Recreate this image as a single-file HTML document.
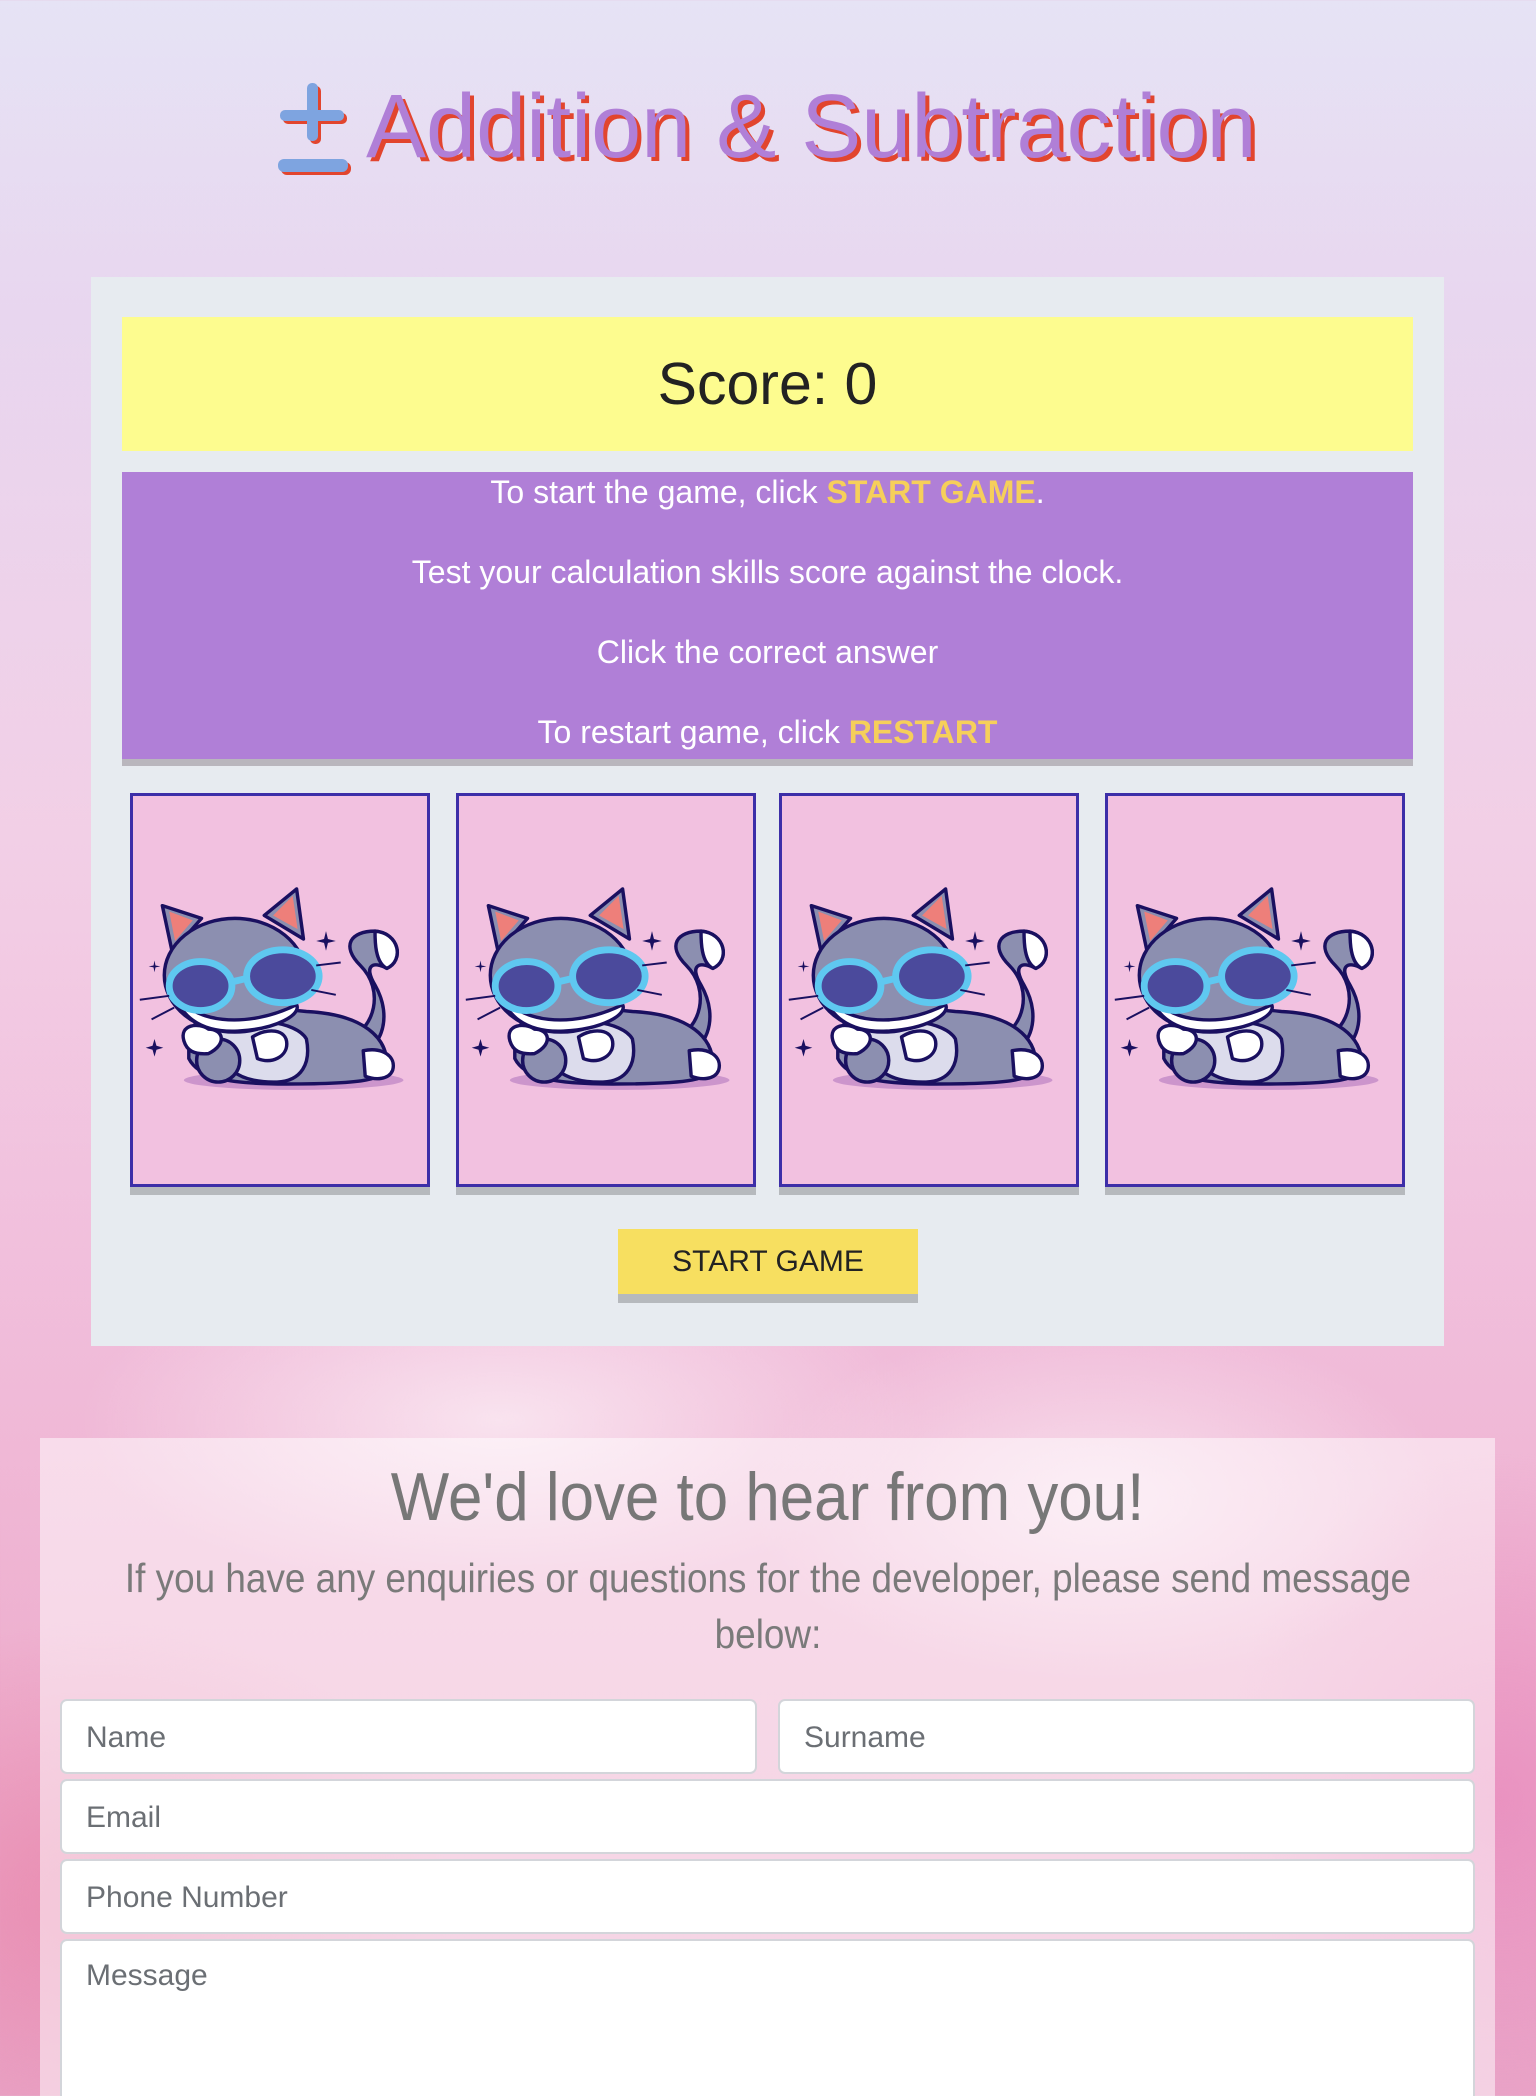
<!DOCTYPE html>
<html><head><meta charset="utf-8"><style>
*{box-sizing:border-box;margin:0;padding:0}
html,body{width:1536px;height:2096px;overflow:hidden}
body{font-family:"Liberation Sans",Arial,sans-serif;position:relative;
background:
radial-gradient(ellipse 500px 260px at 1100px 1500px,rgba(255,255,255,.55),rgba(255,255,255,0) 70%),
radial-gradient(ellipse 600px 250px at 500px 1420px,rgba(255,255,255,.6),rgba(255,255,255,0) 70%),
radial-gradient(ellipse 500px 400px at 100px 1900px,rgba(230,110,150,.5),rgba(230,110,150,0) 70%),
radial-gradient(ellipse 400px 500px at 1500px 1800px,rgba(230,120,180,.5),rgba(230,120,180,0) 70%),
linear-gradient(180deg,#e6e3f5 0%,#e8d6ef 15%,#f2cfe6 40%,#f1bfdc 60%,#eeb0cf 80%,#e9a6c8 100%);}
h1{position:absolute;left:366px;top:76px;font-size:90px;font-weight:normal;color:#b07fd7;text-shadow:4px 4px 0 #e2452e;white-space:nowrap;letter-spacing:0}
.panel{position:absolute;left:91px;top:277px;width:1353px;height:1069px;background:#e7ebf0}
.score{position:absolute;left:31px;top:40px;width:1291px;height:134px;background:#fdfc8f;font-size:59px;color:#222;text-align:center;line-height:134px}
.info{position:absolute;left:31px;top:195px;width:1291px;height:294px;background:#b07fd7;border-bottom:7px solid #b9b6bd;color:#fff;font-size:32px;text-align:center}
.info p{position:absolute;left:0;right:0}
.info b{color:#f6cf5a}
.card{position:absolute;top:516px;width:300px;height:402px;border-bottom:8px solid #b6b9bd}
.card div{width:300px;height:394px;background:#f2c1e0;border:3px solid #3d2ea8}
.btn{position:absolute;left:527px;top:952px;width:300px;height:74px;background:#f7df60;border-bottom:9px solid #b6b9bd;font-size:30px;text-align:center;line-height:66px;color:#222}
.contact{position:absolute;left:40px;top:1438px;width:1455px;height:700px;background:rgba(255,255,255,.5)}
.contact h2{position:absolute;left:0;right:0;top:20px;text-align:center;font-weight:normal;font-size:68px;color:#777;transform:scaleX(.91)}
.contact .sub{position:absolute;left:-22px;width:1500px;top:112px;text-align:center;font-size:41px;line-height:56px;color:#7a7a7a;transform:scaleX(.9)}
.in{position:absolute;background:#fff;border:2px solid #d3d5da;border-radius:7px;font-size:30px;color:#6b6f74;padding-left:24px;line-height:73px}
</style></head><body>
<svg style="position:absolute;left:278px;top:80px" width="76" height="100" viewBox="0 0 76 100">
<g fill="#e2452e"><rect x="32" y="6" width="11" height="58" rx="5"/><rect x="5" y="33" width="64" height="11" rx="5"/><rect x="3" y="82" width="70" height="13" rx="6"/></g>
<g fill="#7ea4e0"><rect x="29" y="3" width="11" height="58" rx="5"/><rect x="2" y="30" width="64" height="11" rx="5"/><rect x="0" y="79" width="70" height="13" rx="6"/></g>
</svg>
<h1>Addition &amp; Subtraction</h1>
<svg width="0" height="0" style="position:absolute"><defs>
<symbol id="cat" viewBox="0 0 300 394">
<ellipse cx="167" cy="292" rx="112" ry="10" fill="#cc95cc"/>
<g stroke="#1a1060" stroke-width="3.5" stroke-linejoin="round">
<path d="M222 250 C250 240 260 200 235 175 C215 155 225 140 250 140 C275 142 280 170 262 178 C248 170 238 175 250 195 C270 230 255 265 225 270Z" fill="#8c8fb0"/>
<path d="M250 140 C275 142 280 170 262 178 C250 172 250 150 250 140Z" fill="#fff"/>
<path d="M60 250 C60 220 120 215 180 222 C240 225 262 250 262 275 C262 292 240 296 160 296 C100 296 70 290 60 270Z" fill="#8c8fb0"/>
<path d="M85 240 C120 225 170 232 180 250 C185 275 175 293 150 294 C110 295 90 280 85 240Z" fill="#dcdcec"/>
<ellipse cx="90" cy="272" rx="22" ry="22" fill="#8c8fb0"/>
<path d="M125 248 C140 238 160 240 160 255 C160 268 145 276 130 270Z" fill="#fff"/>
<path d="M238 262 C258 258 272 268 268 282 C264 292 250 292 240 288Z" fill="#fff"/>
<path d="M33 114 L73 127 L43 161Z" fill="#8c8fb0"/>
<path d="M170 97 L137 124 L177 148Z" fill="#8c8fb0"/>
<ellipse cx="107" cy="185" rx="72" ry="58" fill="#8c8fb0"/>
<path d="M45 200 C60 235 120 240 170 215 C175 225 150 240 110 242 C70 244 50 225 45 200Z" fill="#fff"/>
<path d="M55 252 C50 235 70 233 80 240 C95 240 100 255 80 265 C65 266 58 262 55 252Z" fill="#fff"/>
</g>
<path d="M40 120 L64 129 L46 150Z" fill="#ee7f7a"/>
<path d="M166 104 L146 124 L171 138Z" fill="#ee7f7a"/>
<g stroke="#5fc8f0" stroke-width="7" fill="#4b4a9c">
<ellipse cx="72" cy="196" rx="32" ry="25"/><ellipse cx="156" cy="186" rx="37" ry="27"/>
<path d="M103 192 L120 188" fill="none"/>
</g>
<g stroke="#1a1060" stroke-width="2" fill="none"><path d="M10 210 L40 206 M22 230 L45 218 M190 175 L215 172 M185 200 L210 205"/></g>
<g fill="#1a1060"><path d="M200 140 l2 8 8 2 -8 2 -2 8 -2 -8 -8 -2 8 -2Z"/><path d="M25 250 l2 7 7 2 -7 2 -2 7 -2 -7 -7 -2 7 -2Z"/><path d="M25 170 l1 5 5 1 -5 1 -1 5 -1 -5 -5 -1 5 -1Z"/></g>
</symbol></defs></svg>
<div class="panel">
<div class="score">Score: 0</div>
<div class="info">
<p style="top:2px">To start the game, click <b>START GAME</b>.</p>
<p style="top:82px">Test your calculation skills score against the clock.</p>
<p style="top:162px">Click the correct answer</p>
<p style="top:242px">To restart game, click <b>RESTART</b></p>
</div>
<div class="card" style="left:39px"><div><svg width="294" height="388" viewBox="3 3 294 388"><use href="#cat"/></svg></div></div>
<div class="card" style="left:365px"><div><svg width="294" height="388" viewBox="3 3 294 388"><use href="#cat"/></svg></div></div>
<div class="card" style="left:688px"><div><svg width="294" height="388" viewBox="3 3 294 388"><use href="#cat"/></svg></div></div>
<div class="card" style="left:1014px"><div><svg width="294" height="388" viewBox="3 3 294 388"><use href="#cat"/></svg></div></div>
<div class="btn">START GAME</div>
</div>
<div class="contact">
<h2>We'd love to hear from you!</h2>
<div class="sub">If you have any enquiries or questions for the developer, please send message below:</div>
<div class="in" style="left:20px;top:261px;width:697px;height:75px">Name</div>
<div class="in" style="left:738px;top:261px;width:697px;height:75px">Surname</div>
<div class="in" style="left:20px;top:341px;width:1415px;height:75px">Email</div>
<div class="in" style="left:20px;top:421px;width:1415px;height:75px">Phone Number</div>
<div class="in" style="left:20px;top:501px;width:1415px;height:200px;line-height:70px">Message</div>
</div>
</body></html>
